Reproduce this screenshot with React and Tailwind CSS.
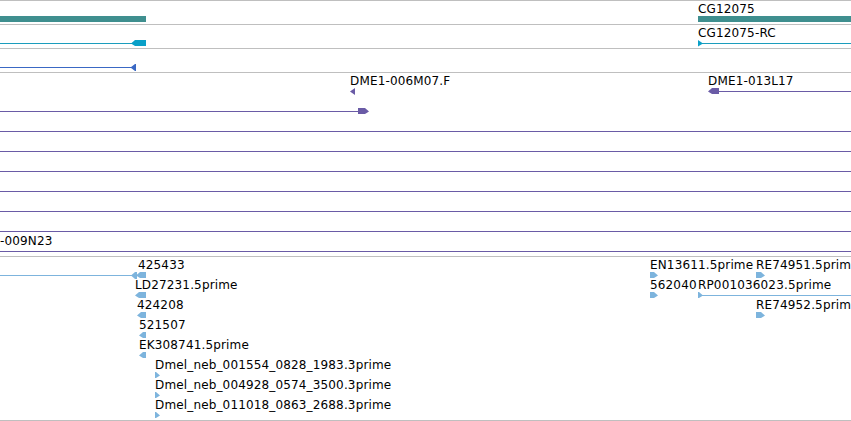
import React from "react";

const TEAL = "#3f8f8f";
const CYAN = "#0aa0c8";
const CYANL = "#1b9dbd";
const BLUE = "#3a68c4";
const PURPLE = "#6a5ba6";
const EST = "#7db4dd";

function HLine({ x1, x2, row, c }) {
  return <line x1={x1} x2={x2} y1={row + 0.5} y2={row + 0.5} stroke={c} strokeWidth="1" shapeRendering="crispEdges" />;
}

function ArrowL({ x1, x2, row, c, tip = 4 }) {
  const t = row - 3, b = row + 3, m = row + 0.5;
  return <polygon points={`${x1},${m} ${x1 + tip},${t} ${x2},${t} ${x2},${b} ${x1 + tip},${b}`} fill={c} />;
}

function ArrowR({ x1, x2, row, c, tip = 4 }) {
  const t = row - 3, b = row + 3, m = row + 0.5;
  return <polygon points={`${x1},${t} ${x2 - tip},${t} ${x2},${m} ${x2 - tip},${b} ${x1},${b}`} fill={c} />;
}

function Label({ x, row, offset, children }) {
  return (
    <div
      className="absolute whitespace-nowrap text-[12px] leading-[12px] tracking-[0.15px] text-black"
      style={{ left: x, top: row - 16 - offset }}
    >
      {children}
    </div>
  );
}

function Track({ offset, height, first, children, labels }) {
  return (
    <div
      className={`relative w-full overflow-hidden border-b border-[#bfbfbf] ${first ? "border-t" : ""}`}
      style={{ height: height + 1 + (first ? 1 : 0) }}
    >
      <svg
        className="absolute left-0 top-0"
        width="851"
        height={height}
        viewBox={`0 ${offset} 851 ${height}`}
      >
        {children}
      </svg>
      {labels.map((l, i) => (
        <Label key={i} x={l.x} row={l.row} offset={offset}>
          {l.t}
        </Label>
      ))}
    </div>
  );
}

export default function App() {
  const ests = [
    { x: 138, t: "425433" },
    { x: 135, t: "LD27231.5prime" },
    { x: 137, t: "424208" },
    { x: 139, t: "521507" },
    { x: 139, t: "EK308741.5prime" },
    { x: 155, t: "Dmel_neb_001554_0828_1983.3prime" },
    { x: 155, t: "Dmel_neb_004928_0574_3500.3prime" },
    { x: 155, t: "Dmel_neb_011018_0863_2688.3prime" },
  ];
  const estLabels = [
    ...ests.map((e, i) => ({ x: e.x, row: 275 + 20 * i, t: e.t })),
    { x: 650, row: 275, t: "EN13611.5prime" },
    { x: 756, row: 275, t: "RE74951.5prime" },
    { x: 650, row: 295, t: "562040" },
    { x: 698, row: 295, t: "RP001036023.5prime" },
    { x: 756, row: 315, t: "RE74952.5prime" },
  ];

  return (
    <div className="w-[851px] h-[421px] bg-white overflow-hidden font-['DejaVu_Sans',sans-serif]">
      <Track offset={1} height={23} first labels={[{ x: 698, row: 19, t: "CG12075" }]}>
        <rect x="0" y="16" width="146" height="6" fill={TEAL} shapeRendering="crispEdges" />
        <rect x="698" y="16" width="153" height="6" fill={TEAL} shapeRendering="crispEdges" />
      </Track>

      <Track offset={25} height={23} labels={[{ x: 698, row: 43, t: "CG12075-RC" }]}>
        <HLine x1={0} x2={132} row={43} c={CYANL} />
        <ArrowL x1={131} x2={146} row={43} c={CYAN} />
        <HLine x1={700} x2={851} row={43} c={CYANL} />
        <polygon points="698,40 698,46.5 703,43.5" fill={CYAN} />
      </Track>

      <Track offset={49} height={23} labels={[]}>
        <HLine x1={0} x2={132} row={67} c={BLUE} />
        <polygon points="130.5,67.5 135,64 136,64 136,71 135,71" fill={BLUE} />
      </Track>

      <Track
        offset={73}
        height={183}
        labels={[
          { x: 350, row: 91, t: "DME1-006M07.F" },
          { x: 708, row: 91, t: "DME1-013L17" },
          { x: 0, row: 251, t: "-009N23" },
        ]}
      >
        <polygon points="350,91.5 355,88 355,95" fill={PURPLE} />
        <ArrowL x1={708} x2={719} row={91} c={PURPLE} />
        <HLine x1={718} x2={851} row={91} c={PURPLE} />
        <HLine x1={0} x2={359} row={111} c={PURPLE} />
        <ArrowR x1={358} x2={369} row={111} c={PURPLE} />
        {[131, 151, 171, 191, 211, 231, 251].map((r) => (
          <HLine key={r} x1={0} x2={851} row={r} c={PURPLE} />
        ))}
      </Track>

      <Track offset={257} height={163} labels={estLabels}>
        <HLine x1={0} x2={132} row={275} c={EST} />
        <polygon points="131,275.5 135,272 137,272 137,279 135,279" fill={EST} />
        <ArrowL x1={136} x2={146} row={275} c={EST} />
        <ArrowL x1={135} x2={146} row={295} c={EST} />
        <ArrowL x1={137} x2={146} row={315} c={EST} />
        <ArrowL x1={139} x2={146} row={335} c={EST} />
        <ArrowL x1={139} x2={146} row={355} c={EST} />
        <ArrowR x1={155} x2={160} row={375} c={EST} />
        <ArrowR x1={155} x2={160} row={395} c={EST} />
        <ArrowR x1={155} x2={160} row={415} c={EST} />
        <ArrowR x1={650} x2={658} row={275} c={EST} />
        <ArrowR x1={756} x2={765} row={275} c={EST} />
        <ArrowR x1={650} x2={658} row={295} c={EST} />
        <ArrowR x1={698} x2={703} row={295} c={EST} />
        <HLine x1={702} x2={851} row={295} c={EST} />
        <ArrowR x1={756} x2={765} row={315} c={EST} />
      </Track>
    </div>
  );
}
